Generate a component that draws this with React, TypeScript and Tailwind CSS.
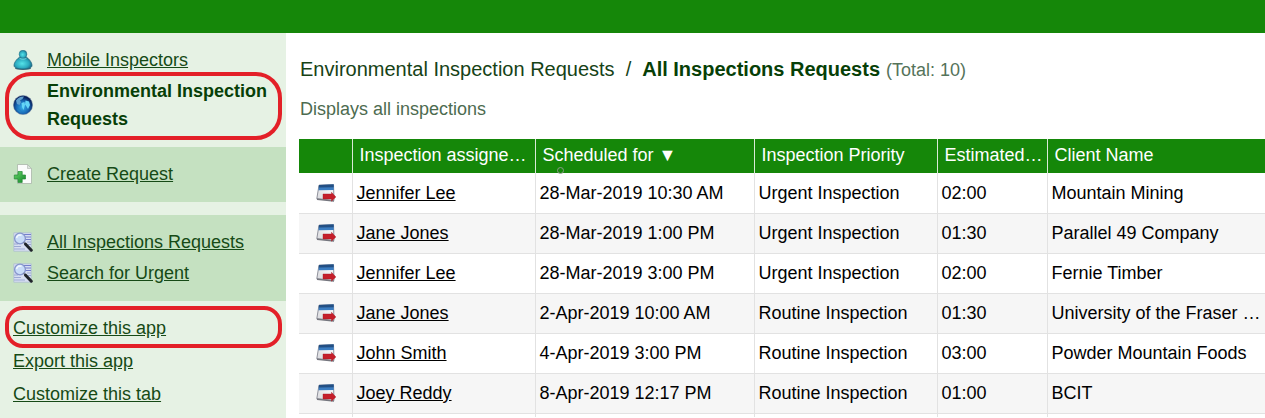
import type { ReactNode } from "react";

type NavItemProps = {
  icon: ReactNode;
  label: string;
  active?: boolean;
};

const links = ["Customize this app", "Export this app", "Customize this tab"];

const rows = [
  ["Jennifer Lee", "28-Mar-2019 10:30 AM", "Urgent Inspection", "02:00", "Mountain Mining"],
  ["Jane Jones", "28-Mar-2019 1:00 PM", "Urgent Inspection", "01:30", "Parallel 49 Company"],
  ["Jennifer Lee", "28-Mar-2019 3:00 PM", "Urgent Inspection", "02:00", "Fernie Timber"],
  ["Jane Jones", "2-Apr-2019 10:00 AM", "Routine Inspection", "01:30", "University of the Fraser …"],
  ["John Smith", "4-Apr-2019 3:00 PM", "Routine Inspection", "03:00", "Powder Mountain Foods"],
  ["Joey Reddy", "8-Apr-2019 12:17 PM", "Routine Inspection", "01:00", "BCIT"],
];

function PersonIcon() {
  return (
    <svg viewBox="0 0 20 20" className="size-5 shrink-0" aria-hidden="true">
      <defs>
        <radialGradient id="person" cx="45%" cy="55%" r="62%">
          <stop offset="0" stopColor="#55e2e8" />
          <stop offset="0.6" stopColor="#2cabc0" />
          <stop offset="1" stopColor="#175a78" />
        </radialGradient>
      </defs>
      <ellipse cx="10" cy="18.4" rx="8" ry="1.5" fill="#22455a" opacity="0.8" />
      <path d="M7 7C4 8.500 1 12.500 1 15.500c0 2.500 3.800 3.500 9 3.500s9-1 9-3.500c0-3-3-7-6-8.500z" fill="url(#person)" stroke="#1d6580" strokeWidth="0.7" />
      <circle cx="10" cy="4.200" r="3.900" fill="url(#person)" stroke="#2a7f93" strokeWidth="0.6" />
      <path d="M6.500 8.300c2 1.200 5 1.200 7 0" stroke="#8ae6ea" strokeWidth="0.7" fill="none" />
    </svg>
  );
}

function GlobeIcon() {
  return (
    <svg viewBox="0 0 20 20" className="size-5 shrink-0" aria-hidden="true">
      <defs>
        <radialGradient id="globe" cx="48%" cy="62%" r="55%">
          <stop offset="0" stopColor="#35aeea" />
          <stop offset="0.6" stopColor="#1767b4" />
          <stop offset="1" stopColor="#081d58" />
        </radialGradient>
      </defs>
      <circle cx="10" cy="10" r="9.600" fill="url(#globe)" stroke="#69809f" strokeWidth="0.5" />
      <path d="M3 5.500C5 2.800 8 1.300 11 1.600L9.500 4 7 5.500l1 1.500-1.500 3-2.500-1z" fill="#5f9fce" />
      <path d="M8.500 8l3-1 .5 3-1.500 5-1.500-3zM12.500 5.500l3.500 1 1 3.500-2 4-1.500-2.500-1.500-2z" fill="#63d5f7" />
      <path d="M4 14l3 1 1.500 2.800c-2-.4-3.700-1.600-4.500-3.800z" fill="#2583c4" />
    </svg>
  );
}

function CreateIcon() {
  return (
    <svg viewBox="0 0 20 20" className="size-5 shrink-0" aria-hidden="true">
      <defs>
        <linearGradient id="plus" x1="0" y1="0" x2="1" y2="1">
          <stop offset="0" stopColor="#69d76b" />
          <stop offset="1" stopColor="#108426" />
        </linearGradient>
      </defs>
      <path d="M4.500.5h10l4 4v15h-14z" fill="#fbfcfb" stroke="#a9b5aa" strokeWidth="0.8" />
      <path d="M14.500.5v4h4z" fill="#dfe4df" stroke="#a9b5aa" strokeWidth="0.6" />
      <path d="M5 7.500h4.200v3.500h3.300v4H9.200v3.500H5V15H1.300v-4H5z" fill="url(#plus)" stroke="#278b38" strokeWidth="0.7" />
    </svg>
  );
}

function SearchIcon() {
  return (
    <svg viewBox="0 0 20 20" className="size-5 shrink-0" aria-hidden="true">
      <path d="M.8.8h17.400v18.400H.8z" fill="#d7def1" stroke="#a4b4cf" strokeWidth="0.6" />
      <path d="M10 2.500h8M11 5h7M12 7.500h6" stroke="#7480cd" strokeWidth="1.200" />
      <path d="M1 12h4M1 14.500h7M1 17h11M14 10h4M15 12.500h3" stroke="#9ca9d4" strokeWidth="1" />
      <circle cx="7" cy="6.500" r="5.400" fill="#c8dcf8" stroke="#8796cc" strokeWidth="1.300" />
      <path d="M3.500 6C4 3.800 6 2.700 8.500 3.200" stroke="#f2f8ff" strokeWidth="1.500" fill="none" />
      <path d="M10.500 10l2.500 2.500" stroke="#79839c" strokeWidth="1.700" />
      <path d="M12.600 12.200l5.700 6" stroke="#20242a" strokeWidth="3" strokeLinecap="round" />
    </svg>
  );
}

function OpenIcon() {
  return (
    <svg viewBox="0 0 20 18" className="mx-auto h-[18px] w-5" aria-hidden="true">
      <defs>
        <linearGradient id="sheet" x1="1" y1="0" x2="0" y2="1">
          <stop offset="0" stopColor="#ffffff" />
          <stop offset="1" stopColor="#d9dade" />
        </linearGradient>
      </defs>
      <path d="M3 1.200L17.500.5l.5 16L.8 14.600z" fill="url(#sheet)" stroke="#777985" strokeWidth="0.8" />
      <path d="M3 1L17.600.5l.2 5.500-15.300.2z" fill="#3a7cc0" />
      <path d="M3 1L17.600.5l.1 2.700L2.800 3.500z" fill="#234f83" />
      <path d="M.8 14.600L18 16.400v1.300L1 15.900z" fill="#75767e" />
      <path d="M7 10h8.500V8.300l4.400 4.700-4.400 4.200V15H7z" fill="#c51f2b" stroke="#a41723" strokeWidth="0.4" />
    </svg>
  );
}

function NavItem({ icon, label, active }: NavItemProps) {
  return (
    <li className="relative flex items-center gap-3.5">
      {icon}
      <a href="#" className={active ? "font-bold text-[#073f07]" : "underline"}>
        {label}
      </a>
      {active && (
        <span className="pointer-events-none absolute -top-[5px] -right-[9px] -bottom-[7px] -left-2 rounded-[26px] border-4 border-[#e32028]" />
      )}
    </li>
  );
}

export default function App() {
  return (
    <div className="flex min-h-screen flex-col bg-white font-['Liberation_Sans',Arial,sans-serif] text-[18px] leading-7 text-black">
      <header className="h-[33px] bg-[#158709]" />

      <div className="flex grow">
        <aside className="w-[286px] shrink-0 bg-[#e6f2e4] text-[#164a16]">
          <nav>
            <ul className="flex flex-col gap-[3px] px-[13px] pt-[13px] pb-3.5">
              <NavItem icon={<PersonIcon />} label="Mobile Inspectors" />
              <NavItem icon={<GlobeIcon />} label="Environmental Inspection Requests" active />
            </ul>
            <ul className="bg-[#c5e1c1] px-[13px] pt-[13px] pb-3.5">
              <NavItem icon={<CreateIcon />} label="Create Request" />
            </ul>
            <ul className="mt-[13px] flex flex-col gap-[3px] bg-[#c5e1c1] px-[13px] pt-[13px] pb-3.5">
              <NavItem icon={<SearchIcon />} label="All Inspections Requests" />
              <NavItem icon={<SearchIcon />} label="Search for Urgent" />
            </ul>
            <ul className="flex flex-col gap-[5px] px-[13px] pt-[13px]">
              {links.map((label, i) => (
                <li key={label} className="relative">
                  <a href="#" className="underline">
                    {label}
                  </a>
                  {i === 0 && (
                    <span className="pointer-events-none absolute -top-2 -right-[9px] -bottom-1.5 -left-2 rounded-[18px] border-4 border-[#e32028]" />
                  )}
                </li>
              ))}
            </ul>
          </nav>
        </aside>

        <main className="min-w-0 grow pt-[22px] pl-[13px]">
          <h1 className="mb-3 flex h-7 items-baseline pl-px text-[20px] text-[#164216]">
            <span>Environmental Inspection Requests</span>
            <span className="mx-[11px]">/</span>
            <span className="font-bold text-[#073f07]">All Inspections Requests</span>
            <span className="ml-1.5 text-[18px] text-[#55735a]">(Total: 10)</span>
          </h1>
          <p className="mb-4 pl-px text-[#4d6b50]">Displays all inspections</p>

          <table className="w-full table-fixed border-collapse text-left whitespace-nowrap">
            <colgroup>
              <col className="w-[53px]" />
              <col className="w-[183px]" />
              <col className="w-[219px]" />
              <col className="w-[183px]" />
              <col className="w-[110px]" />
              <col />
            </colgroup>
            <thead>
              <tr className="h-[34px] bg-[#158709] text-white [&>th]:border-r [&>th]:border-[#d9ead7] [&>th]:p-0 [&>th]:pb-0.5 [&>th]:pl-[7px] [&>th]:font-normal [&>th:last-child]:border-r-0">
                <th aria-label="Open" />
                <th>Inspection assigne…</th>
                <th className="relative">
                  Scheduled for ▼
                  <span className="absolute -bottom-px left-[21px] size-[7px] rounded-full border border-[#8a9a88]" />
                </th>
                <th>Inspection Priority</th>
                <th>Estimated…</th>
                <th>Client Name</th>
              </tr>
            </thead>
            <tbody>
              {rows.map(([name, date, priority, time, client], i) => (
                <tr
                  key={i}
                  className="h-10 border-b border-[#e2e2e2] even:bg-[#f6f6f6] [&>td]:border-r [&>td]:border-[#e2e2e2] [&>td]:p-0 [&>td]:pl-1 [&>td:first-child]:pl-0.5 [&>td:last-child]:border-r-0"
                >
                  <td>
                    <a href="#" aria-label="Open">
                      <OpenIcon />
                    </a>
                  </td>
                  <td>
                    <a href="#" className="underline">
                      {name}
                    </a>
                  </td>
                  <td>{date}</td>
                  <td>{priority}</td>
                  <td>{time}</td>
                  <td>{client}</td>
                </tr>
              ))}
              <tr className="h-1 [&>td]:border-r [&>td]:border-[#e2e2e2] [&>td]:p-0 [&>td:last-child]:border-r-0">
                <td />
                <td />
                <td />
                <td />
                <td />
                <td />
              </tr>
            </tbody>
          </table>
        </main>
      </div>
    </div>
  );
}
